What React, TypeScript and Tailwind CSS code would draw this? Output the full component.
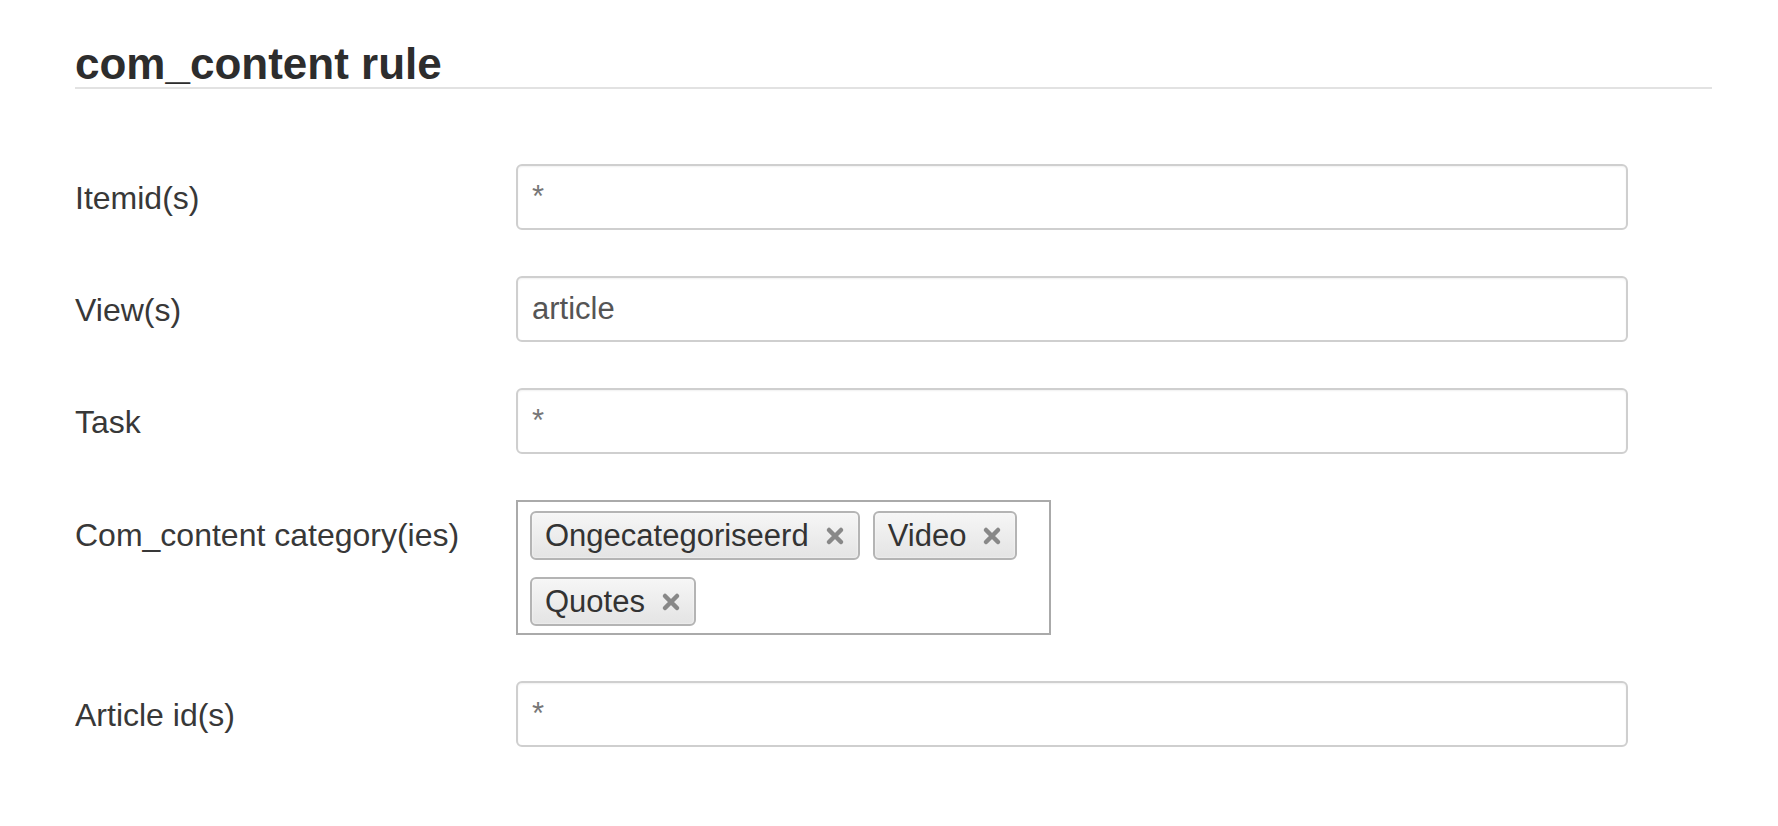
import React from 'react';

const font = { fontFamily: '"Liberation Sans", Arial, sans-serif' };

function Remove() {
    return (
        <svg width="20" height="20" viewBox="0 0 20 20" className="flex-shrink-0">
            <path d="M4 4 L16 16 M16 4 L4 16" stroke="#888" strokeWidth="4.5" strokeLinecap="round" />
        </svg>
    );
}

function Tag({ label }: { label: string }) {
    return (
        <div className="h-[49px] flex items-center gap-[16px] pl-[13px] pr-[13px] border-2 border-[#b4b4b4] rounded-[6px] bg-gradient-to-b from-[#f6f6f6] to-[#e4e4e4] text-[31px] text-[#333] shadow-[0_0_2px_#fff_inset]">
            <span className="leading-none">{label}</span>
            <Remove />
        </div>
    );
}

function TextRow({ label, value }: { label: string; value: string }) {
    return (
        <div className="flex items-start">
            <label className="w-[441px] h-[66px] flex-shrink-0 pt-[3px] text-[32px] leading-[63px] text-[#383838]">{label}</label>
            <div
                className={`w-[1112px] h-[66px] border-2 border-[#cfcfcf] rounded-[6px] bg-white px-[14px] flex items-center text-[31px] shadow-[inset_0_1px_2px_rgba(0,0,0,0.06)] ${
                    value === '*' ? 'text-[#777]' : 'text-[#555]'
                }`}
            >
                {value}
            </div>
        </div>
    );
}

export default function App() {
    return (
        <div className="min-h-screen bg-white pl-[75px] pr-[66px] pt-[42px]" style={font}>
            {/* Heading */}
            <h2 className="text-[44px] font-bold leading-none text-[#2d2d2d] pb-[1px] border-b-2 border-[#e2e2e2]">
                com_content rule
            </h2>

            {/* Fields */}
            <div className="mt-[75px] flex flex-col gap-[46px]">
                <TextRow label="Itemid(s)" value="*" />
                <TextRow label="View(s)" value="article" />
                <TextRow label="Task" value="*" />

                <div className="flex items-start">
                    <label className="w-[441px] h-[66px] flex-shrink-0 pt-[5px] text-[32px] leading-[61px] text-[#383838]">
                        Com_content category(ies)
                    </label>
                    <div className="w-[535px] h-[135px] border-2 border-[#aaa] bg-white pl-[12px] pr-[12px] pt-[9px] pb-[7px] flex flex-wrap content-start gap-x-[13px] gap-y-[17px]">
                        <Tag label="Ongecategoriseerd" />
                        <Tag label="Video" />
                        <Tag label="Quotes" />
                    </div>
                </div>

                <TextRow label="Article id(s)" value="*" />
            </div>
        </div>
    );
}
